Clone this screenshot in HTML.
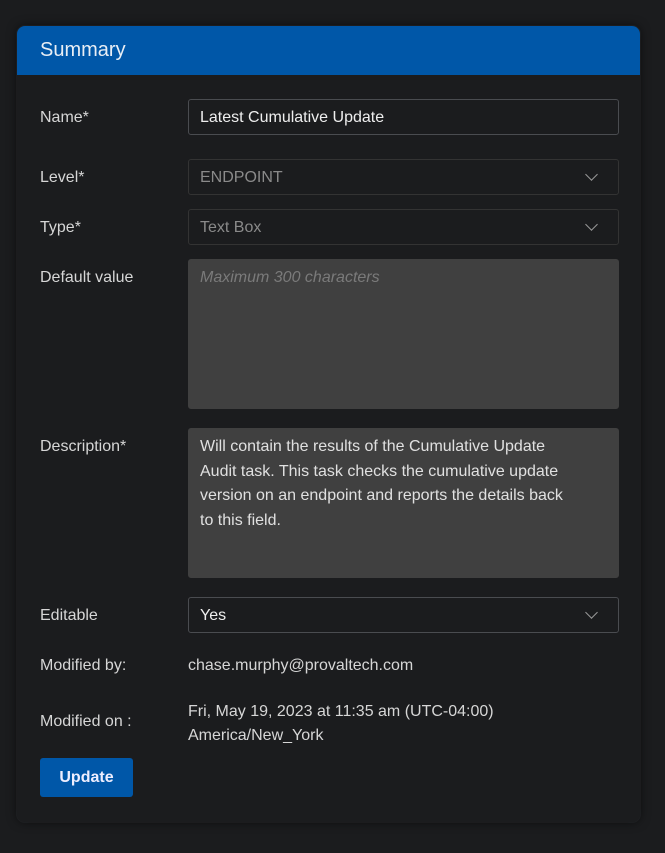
<!DOCTYPE html>
<html><head><style>
body{margin:0;width:665px;height:853px;background:#1b1c1e;font-family:"Liberation Sans",sans-serif;color:#dcdcdc;position:relative;overflow:hidden}
.card{position:absolute;left:17px;top:26px;width:623px;height:796px;background:#1b1c1e;border-radius:8px;box-shadow:0 0 10px rgba(0,0,0,.6),0 0 0 1px #26282b;overflow:hidden}
.hd{height:49px;background:#0057a8;color:#e8eef5;font-size:20px;line-height:49px;padding-left:23px}
.lbl{position:absolute;left:40px;font-size:16px;color:#d6d6d6}
.box{position:absolute;left:188px;width:429px;border:1px solid #4a4c50;border-radius:3px;background:#1b1c1e;font-size:16px;box-sizing:content-box}
.box span{position:absolute;left:11px;top:9px}
.chev{position:absolute;right:22px;top:10px;width:8px;height:8px;border-right:1.3px solid #999;border-bottom:1.3px solid #999;transform:rotate(45deg)}
.ta{background:#404040;border-color:#404040}
.txt{position:absolute;left:188px;font-size:16px;color:#d6d6d6}
.btn{position:absolute;left:40px;top:758px;width:93px;height:39px;background:#0057a8;border-radius:3px;color:#eef;font-weight:bold;font-size:16px;text-align:center;line-height:39px}
</style></head><body>
<div class="card"><div class="hd">Summary</div></div>
<div class="lbl" style="top:109px">Name*</div>
<div class="box" style="top:99px;height:34px"><span style="color:#eee">Latest Cumulative Update</span></div>
<div class="lbl" style="top:169px">Level*</div>
<div class="box" style="top:159px;height:34px;border-color:#333"><span style="color:#8a8a8a">ENDPOINT</span><div class="chev"></div></div>
<div class="lbl" style="top:219px">Type*</div>
<div class="box" style="top:209px;height:34px;border-color:#333"><span style="color:#8a8a8a">Text Box</span><div class="chev"></div></div>
<div class="lbl" style="top:269px">Default value</div>
<div class="box ta" style="top:259px;height:148px"><span style="color:#7a7a7a;font-style:italic">Maximum 300 characters</span></div>
<div class="lbl" style="top:438px">Description*</div>
<div class="box ta" style="top:428px;height:148px"><span style="color:#e0e0e0;line-height:24.5px;top:6px;white-space:nowrap">Will contain the results of the Cumulative Update<br>Audit task. This task checks the cumulative update<br>version on an endpoint and reports the details back<br>to this field.</span></div>
<div class="lbl" style="top:607px">Editable</div>
<div class="box" style="top:597px;height:34px"><span style="color:#eee">Yes</span><div class="chev"></div></div>
<div class="lbl" style="top:657px">Modified by:</div>
<div class="txt" style="top:657px">chase.murphy@provaltech.com</div>
<div class="lbl" style="top:713px">Modified on :</div>
<div class="txt" style="top:700px;line-height:24px">Fri, May 19, 2023 at 11:35 am (UTC-04:00)<br>America/New_York</div>
<div class="btn">Update</div>
</body></html>
